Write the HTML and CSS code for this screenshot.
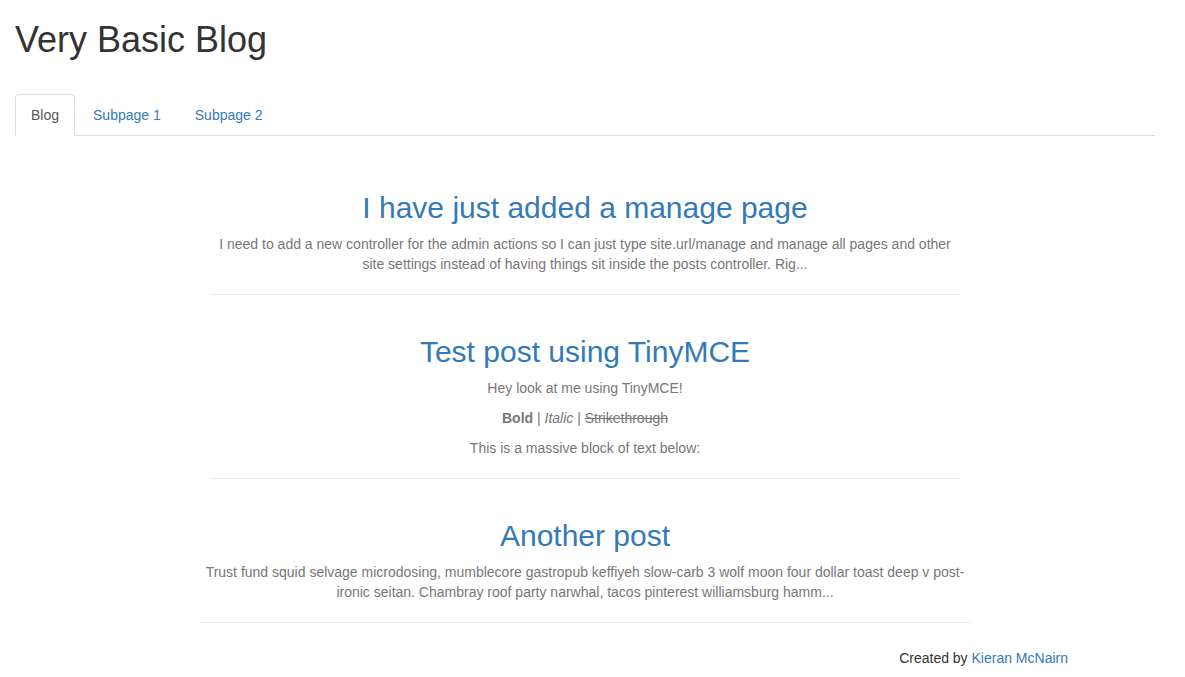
FILE: index.html
```html
<!DOCTYPE html>
<html lang="en">
<head>
<meta charset="utf-8">
<title>Very Basic Blog</title>
<link rel="stylesheet" href="styles.css">
</head>
<body>
<div class="page">
  <header class="site-header">
    <h1 class="site-title">Very Basic Blog</h1>
  </header>
  <ul class="tabs">
    <li class="tab tab-active"><a href="#">Blog</a></li>
    <li class="tab"><a href="#">Subpage 1</a></li>
    <li class="tab"><a href="#">Subpage 2</a></li>
  </ul>
  <main class="posts">
    <article class="post post-narrow">
      <h2 class="post-title"><a href="#">I have just added a manage page</a></h2>
      <p>I need to add a new controller for the admin actions so I can just type site.url/manage and manage all pages and other site settings instead of having things sit inside the posts controller. Rig...</p>
      <hr>
    </article>
    <article class="post post-narrow">
      <h2 class="post-title"><a href="#">Test post using TinyMCE</a></h2>
      <p>Hey look at me using TinyMCE!</p>
      <p><strong>Bold</strong> | <em>Italic</em> | <s>Strikethrough</s></p>
      <p>This is a massive block of text below:</p>
      <hr>
    </article>
    <article class="post post-wide">
      <h2 class="post-title"><a href="#">Another post</a></h2>
      <p>Trust fund squid selvage microdosing, mumblecore gastropub keffiyeh slow-carb 3 wolf moon four dollar toast deep v post-ironic seitan. Chambray roof party narwhal, tacos pinterest williamsburg hamm...</p>
      <hr>
    </article>
  </main>
  <footer class="footer">Created by <a href="#">Kieran McNairn</a></footer>
</div>
</body>
</html>
```

FILE: styles.css
```css
* { box-sizing: border-box; }

html, body {
  margin: 0;
  padding: 0;
  background: #fff;
}

body {
  font-family: "Liberation Sans", Arial, Helvetica, sans-serif;
  font-size: 14px;
  line-height: 20px;
  color: #333;
}

a {
  color: #337ab7;
  text-decoration: none;
}

.page {
  width: 1170px;
  padding: 0 15px;
}

.site-title {
  margin: 20px 0 34px;
  font-size: 36px;
  line-height: 40px;
  font-weight: 500;
  color: #333;
}

.tabs {
  display: flex;
  list-style: none;
  margin: 0;
  padding: 0;
  border-bottom: 1px solid #ddd;
}

.tab {
  margin-right: 2px;
  margin-bottom: -1px;
}

.tab a {
  display: block;
  padding: 10px 15px;
  line-height: 20px;
  border: 1px solid transparent;
  border-radius: 4px 4px 0 0;
  color: #337ab7;
}

.tab-active a {
  color: #555;
  background: #fff;
  border-color: #ddd;
  border-bottom-color: transparent;
}

.posts {
  display: flex;
  flex-direction: column;
  align-items: center;
  padding-top: 35px;
}

.post {
  text-align: center;
  color: #777;
}

.post-narrow { width: 751px; }
.post-wide { width: 770px; }

.post-title {
  margin: 20px 0 10px;
  font-size: 30px;
  line-height: 33px;
  font-weight: 500;
}

.post p {
  margin: 0 0 10px;
}

.post hr {
  margin: 20px 0;
  border: 0;
  border-top: 1px solid #eee;
  height: 0;
}

.footer {
  margin-top: 5px;
  text-align: right;
  padding-right: 87px;
  line-height: 20px;
  color: #333;
}
```
